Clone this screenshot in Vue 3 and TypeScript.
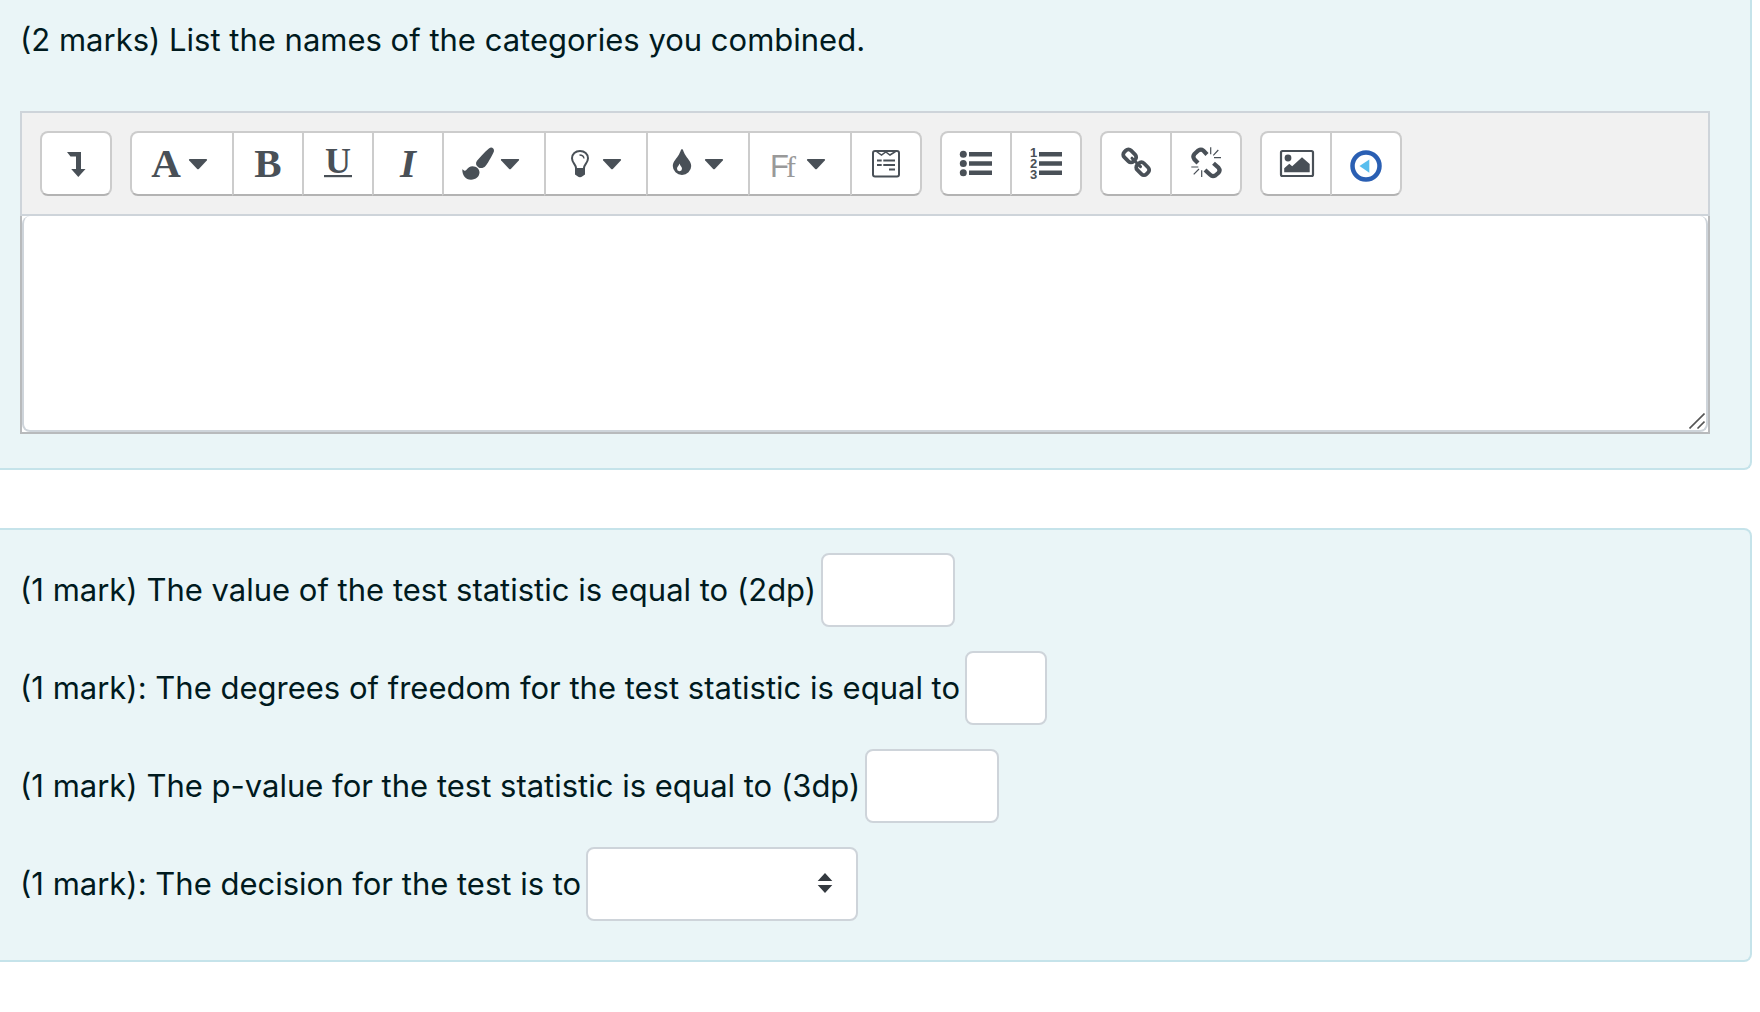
<script setup lang="ts">
import { ref } from 'vue'

interface Tool {
  name: string
  label: string
  menu?: boolean
}

const groups: Tool[][] = [
  [{ name: 'toggle', label: 'Show more buttons' }],
  [
    { name: 'styles', label: 'Paragraph styles', menu: true },
    { name: 'bold', label: 'Bold' },
    { name: 'underline', label: 'Underline' },
    { name: 'italic', label: 'Italic' },
    { name: 'brush', label: 'Font colour', menu: true },
    { name: 'bulb', label: 'Background colour', menu: true },
    { name: 'drop', label: 'Highlight colour', menu: true },
    { name: 'font', label: 'Font family', menu: true },
    { name: 'form', label: 'Insert template' },
  ],
  [
    { name: 'bullets', label: 'Unordered list' },
    { name: 'numbers', label: 'Ordered list' },
  ],
  [
    { name: 'link', label: 'Link' },
    { name: 'unlink', label: 'Unlink' },
  ],
  [
    { name: 'image', label: 'Insert image' },
    { name: 'media', label: 'Insert media' },
  ],
]

const response = ref('')
const statistic = ref('')
const freedom = ref('')
const pValue = ref('')
const decision = ref('')
</script>

<template>
  <main class="page">
    <section class="card card-essay">
      <label class="prompt" for="response">(2 marks) List the names of the categories you combined.</label>
      <div class="editor">
        <div class="toolbar" role="toolbar" aria-label="Editor">
          <div v-for="(group, g) in groups" :key="g" class="group">
            <button
              v-for="tool in group"
              :key="tool.name"
              type="button"
              class="tool"
              :class="{ 'tool-menu': tool.menu }"
              :aria-label="tool.label"
            >
              <svg class="icon" :viewBox="tool.menu ? '0 0 100 61' : '0 0 68 61'" aria-hidden="true">
                <path v-if="tool.name === 'toggle'" d="M25 19H39V36H43.5L36.3 44L29.2 36H34V23.5H28.5Z" />
                <text v-else-if="tool.name === 'styles'" class="serif" x="34" y="44" font-size="41">A</text>
                <text v-else-if="tool.name === 'bold'" class="serif" x="34" y="44" font-size="41">B</text>
                <g v-else-if="tool.name === 'underline'">
                  <text class="serif" x="34" y="40" font-size="36">U</text>
                  <rect x="20" y="42" width="28" height="2.2" />
                </g>
                <text v-else-if="tool.name === 'italic'" class="serif slanted" x="34" y="44" font-size="41">I</text>
                <g v-else-if="tool.name === 'brush'">
                  <path d="M45.3 15.2C47.3 13.8 50.3 15 50 18C49.8 19.5 44.5 29.5 41.5 33C39.5 35.3 36.5 35.6 34.3 34.2C31.8 32.5 31.3 30 33 27.8C35.5 24.5 43.5 16.3 45.3 15.2Z" />
                  <path d="M18.3 36.2C20 37.5 21 38.6 22.3 37C24 34.5 26 33.2 28.5 33.2C32.5 33.2 35.5 36 35.5 39.3C35.5 43.5 32 46.7 27 46.7C21.5 46.7 18.2 42.5 18.3 36.2Z" />
                </g>
                <g v-else-if="tool.name === 'bulb'">
                  <path class="line" stroke-width="2" d="M30 35C30 31.5 26 30 26 25.3C26 21 29.5 18 34 18S42 21 42 25.3C42 30 38 31.5 38 35" />
                  <path class="line" stroke-width="1.3" d="M33.5 22C36 22 37.8 23.5 38 25.5" />
                  <path d="M29 35H39V41.5L36.5 43.2Q34 45.2 31.5 43.2L29 41.5Z" />
                </g>
                <g v-else-if="tool.name === 'drop'">
                  <path d="M34 16C35 16 35.6 19 37 21.5C39 25 43.2 28.5 43.2 33A9.2 9 0 0 1 24.8 33C24.8 28.5 29 25 31 21.5C32.4 19 33 16 34 16Z" />
                  <path fill="#fff" d="M31.5 30.5C32 33 34 33.5 34 35.8A2.5 2.4 0 0 1 29 35.8C29 33.5 31 33 31.5 30.5Z" />
                </g>
                <g v-else-if="tool.name === 'font'" fill="#999">
                  <text class="sans-glyph" x="20" y="44" font-size="31">F</text>
                  <text class="serif-glyph" x="36" y="44" font-size="30">f</text>
                </g>
                <g v-else-if="tool.name === 'form'">
                  <rect class="line" stroke-width="2" x="21" y="18" width="26" height="25.5" rx="2" />
                  <path class="line" stroke-width="1.5" d="M24.5 18.5L29.5 22L33.8 19L38 22L43.5 18.5" />
                  <path class="line" stroke-width="2" d="M25 27.5H29.7M31.3 27.5H43M25 32H29.7M31.3 32H43M37 36.5H43" />
                </g>
                <g v-else-if="tool.name === 'bullets'">
                  <circle cx="21.3" cy="21.3" r="3.5" />
                  <circle cx="21.3" cy="30.5" r="3.5" />
                  <circle cx="21.3" cy="39.7" r="3.5" />
                  <path class="line" stroke-width="4.6" d="M27 21.3H50M27 30.5H50M27 39.7H50" />
                </g>
                <g v-else-if="tool.name === 'numbers'">
                  <text class="digit" font-size="13">
                    <tspan x="21.5" y="24">1</tspan>
                    <tspan x="21.5" y="35">2</tspan>
                    <tspan x="21.5" y="46">3</tspan>
                  </text>
                  <path class="line" stroke-width="4.6" d="M27 21.3H50M27 30.5H50M27 39.7H50" />
                </g>
                <g v-else-if="tool.name === 'link'" class="line">
                  <rect stroke-width="3.8" x="21.2" y="18.2" width="13" height="9.4" rx="3.5" transform="rotate(45 27.7 22.9)" />
                  <rect stroke-width="3.8" x="34.2" y="31" width="13" height="9.4" rx="3.5" transform="rotate(45 40.7 35.7)" />
                  <path stroke-width="3" stroke-linecap="round" d="M30 25.2L38.5 33.6" />
                </g>
                <g v-else-if="tool.name === 'unlink'" class="line">
                  <path stroke-width="4.2" d="M26 30L22.3 26.3Q20.3 23.5 22.5 21L26.3 17.5Q29 15.6 31.3 17.5L35 21.5" />
                  <path stroke-width="4.2" d="M41.5 30.3L46.5 34.8Q48.6 37.5 46.5 39.8L43.5 42.3Q40.5 44 38.2 41.8L33 37" />
                  <path stroke-width="1.2" d="M38.7 14.3V21.3M46.3 17L41.3 22.3M42 24.7H49M19.3 34H26.3M21.7 41.3L27 36M29.7 37.3V44" />
                </g>
                <g v-else-if="tool.name === 'image'">
                  <rect class="line" stroke-width="2.2" x="19" y="18" width="32" height="25" rx="1.5" />
                  <circle cx="26" cy="25" r="3.4" />
                  <path d="M22.2 39.3V35.3L27.3 30.7L30.2 33.3L40 24.3L47.7 31V39.3Z" />
                </g>
                <g v-else-if="tool.name === 'media'">
                  <circle cx="34" cy="33" r="13.5" fill="none" stroke="#2a5fb3" stroke-width="4.5" />
                  <path fill="#58beee" d="M27.5 33L37.3 26.5V39.8Z" />
                </g>
                <path v-if="tool.menu" d="M57.5 26H74.5Q75.6 26.5 74.8 27.5L66.8 36Q66 36.6 65.2 36L57.2 27.5Q56.4 26.5 57.5 26Z" />
              </svg>
            </button>
          </div>
        </div>
        <div class="writing">
          <textarea id="response" v-model="response" class="response"></textarea>
          <svg class="grip" viewBox="0 0 16 16" aria-hidden="true">
            <path d="M0.5 15.5L15.5 0.500M8.5 15.5L15.5 8.500" />
          </svg>
        </div>
      </div>
    </section>

    <section class="card card-answers">
      <div class="answer">
        <label for="statistic">(1 mark) The value of the test statistic is equal to (2dp)</label>
        <input id="statistic" v-model="statistic" class="field" type="text" />
      </div>
      <div class="answer">
        <label for="freedom">(1 mark): The degrees of freedom for the test statistic is equal to</label>
        <input id="freedom" v-model="freedom" class="field field-short" type="text" />
      </div>
      <div class="answer">
        <label for="pvalue">(1 mark) The p-value for the test statistic is equal to (3dp)</label>
        <input id="pvalue" v-model="pValue" class="field" type="text" />
      </div>
      <div class="answer">
        <label for="decision">(1 mark): The decision for the test is to</label>
        <div class="picker">
          <select id="decision" v-model="decision" class="field field-select">
            <option value=""></option>
          </select>
          <svg class="arrows" viewBox="0 0 16 20" aria-hidden="true">
            <path d="M8 0L15.3 8H0.7ZM8 20L15.3 12H0.7Z" />
          </svg>
        </div>
      </div>
    </section>
  </main>
</template>

<style>
body {
  margin: 0;
  background: #fff;
}
</style>

<style scoped>
.page {
  display: flex;
  flex-direction: column;
  gap: 58px;
  padding-right: 8px;
  font-family: Inter, "Liberation Sans", sans-serif;
  font-size: 31px;
  line-height: 48px;
  color: #001a1e;
}

.card {
  box-sizing: border-box;
  background: #eaf5f7;
  border: 2px solid #c5e3ea;
  border-left: 0;
  border-radius: 0 8px 8px 0;
}

.card-essay {
  display: flex;
  flex-direction: column;
  gap: 47px;
  padding: 16px 40px 34px 20px;
  border-top: 0;
  border-top-right-radius: 0;
}

.toolbar {
  display: flex;
  flex-wrap: wrap;
  gap: 18px;
  padding: 18px;
  background: #f1f1f1;
  border: 2px solid #ced4da;
}

.group {
  display: flex;
}

.tool {
  box-sizing: border-box;
  width: 72px;
  height: 65px;
  padding: 0;
  background: #fff;
  border: 2px solid #ccc;
  border-bottom-color: #b3b3b3;
}

.tool + .tool {
  margin-left: -2px;
}

.tool:first-child {
  border-top-left-radius: 8px;
  border-bottom-left-radius: 8px;
}

.tool:last-child {
  border-top-right-radius: 8px;
  border-bottom-right-radius: 8px;
}

.tool-menu {
  width: 104px;
}

.icon {
  display: block;
  width: 100%;
  height: 100%;
  fill: #495057;
}

.line {
  fill: none;
  stroke: #495057;
}

.serif {
  font-family: "Liberation Serif", serif;
  font-weight: 700;
  text-anchor: middle;
}

.slanted {
  font-style: italic;
}

.digit {
  font-family: "Liberation Sans", sans-serif;
  font-weight: 700;
  text-anchor: middle;
}

.sans-glyph {
  font-family: "Liberation Sans", sans-serif;
}

.serif-glyph {
  font-family: "Liberation Serif", serif;
}

.writing {
  position: relative;
  background: #fff;
  border: 2px solid #b8babc;
  border-top: 0;
}

.response {
  box-sizing: border-box;
  display: block;
  width: 100%;
  height: 216px;
  padding: 12px 16px;
  font: inherit;
  color: #495057;
  background: #fff;
  border: 2px solid #ced4da;
  border-top: 0;
  border-radius: 8px;
  resize: none;
}

.grip {
  position: absolute;
  right: 3px;
  bottom: 3px;
  width: 16px;
  height: 16px;
  fill: none;
  stroke: #555;
  stroke-width: 1.6;
}

.card-answers {
  display: flex;
  flex-direction: column;
  gap: 24px;
  padding: 23px 40px 39px 20px;
}

.answer {
  display: flex;
  align-items: center;
  gap: 5px;
}

.field {
  box-sizing: border-box;
  width: 134px;
  height: 74px;
  padding: 12px 20px;
  font: inherit;
  color: #495057;
  background: #fff;
  border: 2px solid #ced4da;
  border-radius: 8px;
}

.field-short {
  width: 82px;
}

.picker {
  position: relative;
}

.field-select {
  display: block;
  width: 272px;
  appearance: none;
}

.arrows {
  position: absolute;
  top: 26px;
  right: 25px;
  width: 16px;
  height: 20px;
  fill: #343a40;
  pointer-events: none;
}
</style>
